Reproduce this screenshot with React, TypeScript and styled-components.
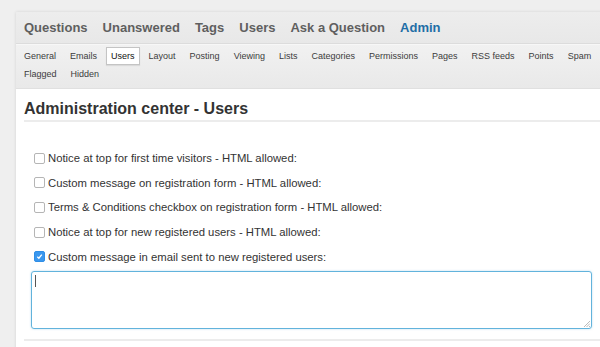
import React from "react";
import styled, { createGlobalStyle } from "styled-components";

const GlobalStyle = createGlobalStyle`
    html, body {
        margin: 0;
        padding: 0;
        background: #efefef;
        font-family: "Liberation Sans", Arial, sans-serif;
        overflow: hidden;
    }
`;

const Page = styled.div`
    padding: 12px 0 0 16px;
    width: 600px;
    box-sizing: border-box;
`;

const Panel = styled.div`
    width: 600px;
    box-shadow: 0 0 3px rgba(0, 0, 0, 0.12);
`;

const MainNav = styled.div`
    height: 31px;
    display: flex;
    align-items: center;
    gap: 15px;
    padding-left: 8px;
    background: linear-gradient(#ededed, #e8e8e8);
    border-bottom: 1px solid #dcdcdc;
`;

const MainLink = styled.a<{ $active?: boolean }>`
    font-size: 13px;
    font-weight: bold;
    color: ${(p) => (p.$active ? "#1f6ea6" : "#5f5f5f")};
    text-decoration: none;
`;

const SubNav = styled.div`
    display: flex;
    flex-wrap: wrap;
    width: 584px;
    box-sizing: border-box;
    padding: 2px 0 5px 3px;
    column-gap: 4px;
    row-gap: 0;
    background: linear-gradient(#f1f1f1, #e9e9e9);
    border-top: 1px solid #f7f7f7;
    border-bottom: 1px solid #e0e0e0;
`;

const SubLink = styled.a<{ $selected?: boolean }>`
    font-size: 9px;
    line-height: 16px;
    height: 16px;
    padding: 0 4px;
    border: 1px solid ${(p) => (p.$selected ? "#c4c4c4" : "transparent")};
    background: ${(p) => (p.$selected ? "#fff" : "transparent")};
    box-shadow: ${(p) => (p.$selected ? "0 1px 1px rgba(0,0,0,0.08)" : "none")};
    color: ${(p) => (p.$selected ? "#111" : "#3c3c3c")};
    text-decoration: none;
`;

const Content = styled.div`
    background: #fff;
    padding: 10px 0 0 8px;
    height: 260px;
`;

const Heading = styled.h1`
    margin: 0;
    font-size: 16px;
    font-weight: bold;
    color: #333;
    line-height: 20px;
    padding-bottom: 1px;
    border-bottom: 2px solid #ececec;
`;

const Options = styled.div`
    display: flex;
    flex-direction: column;
    gap: 8.7px;
    padding: 28px 0 0 10px;
`;

const OptionRow = styled.label`
    display: flex;
    align-items: center;
    gap: 3px;
    font-size: 11.3px;
    line-height: 16px;
    color: #333;
`;

const Box = styled.span<{ $checked?: boolean }>`
    width: 9px;
    height: 9px;
    border-radius: 2px;
    border: 1px solid ${(p) => (p.$checked ? "#2f8ee6" : "#b5b5b5")};
    background: ${(p) => (p.$checked ? "#3a97ee" : "#fff")};
    display: flex;
    align-items: center;
    justify-content: center;
    flex-shrink: 0;
`;

const TextArea = styled.div`
    margin: 6px 0 0 7px;
    width: 561px;
    height: 58px;
    box-sizing: border-box;
    border: 1px solid #62b3dc;
    border-radius: 3px;
    box-shadow: 0 0 2px rgba(98, 179, 220, 0.5);
    position: relative;
`;

const Caret = styled.span`
    position: absolute;
    left: 3px;
    top: 3px;
    width: 1px;
    height: 12px;
    background: #555;
`;

const Grip = styled.svg`
    position: absolute;
    right: 1px;
    bottom: 1px;
`;

const Rule = styled.div`
    margin-top: 10px;
    border-top: 2px solid #ececec;
`;

const mainLinks = ["Questions", "Unanswered", "Tags", "Users", "Ask a Question", "Admin"];
const subLinks = [
    "General", "Emails", "Users", "Layout", "Posting", "Viewing", "Lists",
    "Categories", "Permissions", "Pages", "RSS feeds", "Points", "Spam",
    "Flagged", "Hidden",
];
const options = [
    { text: "Notice at top for first time visitors - HTML allowed:", checked: false },
    { text: "Custom message on registration form - HTML allowed:", checked: false },
    { text: "Terms & Conditions checkbox on registration form - HTML allowed:", checked: false },
    { text: "Notice at top for new registered users - HTML allowed:", checked: false },
    { text: "Custom message in email sent to new registered users:", checked: true },
];

function App() {
    return (
        <Page>
            <GlobalStyle />
            <Panel>
                <MainNav>
                    {mainLinks.map((l) => (
                        <MainLink key={l} $active={l === "Admin"}>{l}</MainLink>
                    ))}
                </MainNav>
                <SubNav>
                    {subLinks.map((l) => (
                        <SubLink key={l} $selected={l === "Users"}>{l}</SubLink>
                    ))}
                </SubNav>
                <Content>
                    <Heading>Administration center - Users</Heading>
                    <Options>
                        {options.map((o) => (
                            <OptionRow key={o.text}>
                                <Box $checked={o.checked}>
                                    {o.checked && (
                                        <svg width="7" height="7" viewBox="0 0 8 8">
                                            <path d="M1.5 4.2 L3.3 6 L6.6 1.8" fill="none" stroke="#fff" strokeWidth="1.5" />
                                        </svg>
                                    )}
                                </Box>
                                {o.text}
                            </OptionRow>
                        ))}
                    </Options>
                    <TextArea>
                        <Caret />
                        <Grip width="7" height="7" viewBox="0 0 7 7">
                            <path d="M1 7 L7 1 M3.5 7 L7 3.5 M6 7 L7 6" stroke="#aaa" strokeWidth="0.8" />
                        </Grip>
                    </TextArea>
                    <Rule />
                </Content>
            </Panel>
        </Page>
    );
}

export default App;
